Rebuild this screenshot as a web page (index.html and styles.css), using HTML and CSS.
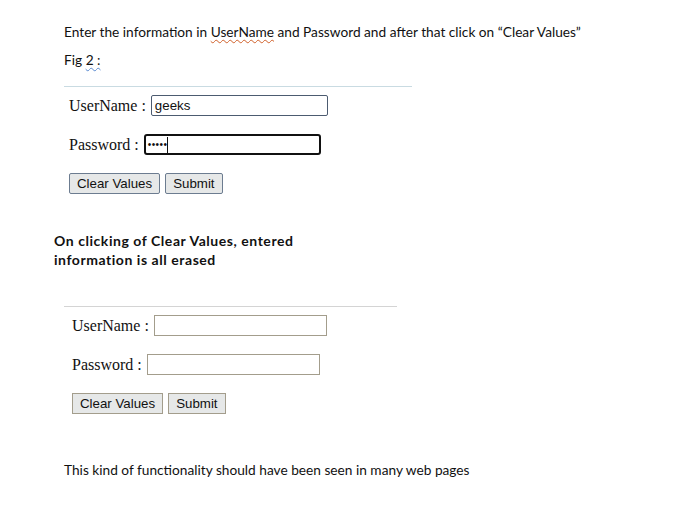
FILE: index.html
```html
<!DOCTYPE html>
<html>
<head>
<meta charset="utf-8">
<link rel="stylesheet" href="styles.css">
</head>
<body>
<div class="doc">
  <p class="prose intro">Enter the information in <span class="squig-red">UserName</span> and Password and after that click on “Clear Values”</p>
  <p class="prose fig">Fig <span class="squig-blue">2 :</span></p>

  <div class="form form-one">
    <div class="row"><span class="label">UserName :</span><span class="input input-plain">geeks</span></div>
    <div class="row row-pw"><span class="label">Password :</span><span class="input input-focus"><span class="dots">•••••</span><span class="caret"></span></span></div>
    <div class="row buttons"><span class="btn">Clear Values</span><span class="btn">Submit</span></div>
  </div>

  <p class="prose bold">On clicking of Clear Values, entered<br>information is all erased</p>

  <div class="form form-two">
    <div class="row"><span class="label">UserName :</span><span class="input input-empty"></span></div>
    <div class="row row-pw"><span class="label">Password :</span><span class="input input-empty"></span></div>
    <div class="row buttons"><span class="btn btn-flat">Clear Values</span><span class="btn btn-flat">Submit</span></div>
  </div>

  <p class="prose outro">This kind of functionality should have been seen in many web pages</p>
</div>
</body>
</html>
```
FILE: styles.css
```css
html, body { margin: 0; padding: 0; background: #ffffff; }
.doc { padding-top: 22px; width: 689px; height: 530px; box-sizing: border-box; }
.prose {
  font-family: Lato, "Open Sans", sans-serif;
  font-size: 13.7px;
  color: #111;
  margin: 0;
  line-height: 19px;
}
.intro { margin-left: 64px; }
.fig { margin-left: 64px; margin-top: 9px; }
.squig-red {
  text-decoration: underline wavy #d0602a;
  text-decoration-thickness: 1px;
  text-underline-offset: 2px;
}
.squig-blue {
  text-decoration: underline wavy #5a8ad0;
  text-decoration-thickness: 1px;
  text-underline-offset: 2px;
}
.form { display: flex; flex-direction: column; gap: 18px; }
.form-one { margin-left: 64px; width: 343px; border-top: 1px solid #c9dbe2; margin-top: 17px; padding: 8px 0 0 5px; }
.form-two { margin-left: 64px; width: 325px; border-top: 1px solid #d4d4d4; margin-top: 37px; padding: 8px 0 0 8px; }
.row { display: flex; align-items: center; height: 21px; }
.label {
  font-family: "Liberation Serif", serif;
  font-size: 16px;
  color: #111;
  margin-right: 5px;
}
.input {
  box-sizing: border-box;
  height: 21px;
  width: 177px;
  display: flex;
  align-items: center;
  font-family: "Liberation Sans", Arial, sans-serif;
  font-size: 13.3px;
  color: #111;
  padding-left: 3px;
}
.input-plain { border: 1px solid #4c5b70; border-radius: 2px; }
.input-focus { border: 2px solid #111; border-radius: 3px; padding-left: 2px; }
.dots { font-size: 10px; letter-spacing: 0.4px; }
.caret { display: inline-block; width: 1px; height: 16px; background: #111; margin-left: 0; }
.input-empty { border: 1px solid #a39d8c; width: 173px; }
.buttons { gap: 5px; height: 21px; margin-top: 0; }
.btn {
  box-sizing: border-box;
  height: 21px;
  display: inline-flex;
  align-items: center;
  padding: 0 7px;
  font-family: "Liberation Sans", Arial, sans-serif;
  font-size: 13.3px;
  color: #111;
  background: #e6e8e8;
  border: 1px solid #6c7c90;
  border-radius: 2px;
}
.btn-flat { border-color: #a39d8c; border-radius: 0; }
.bold { font-weight: bold; font-size: 14px; letter-spacing: 0.55px; margin-left: 54px; margin-top: 37px; }
.outro { margin-left: 64px; margin-top: 46px; }
```
